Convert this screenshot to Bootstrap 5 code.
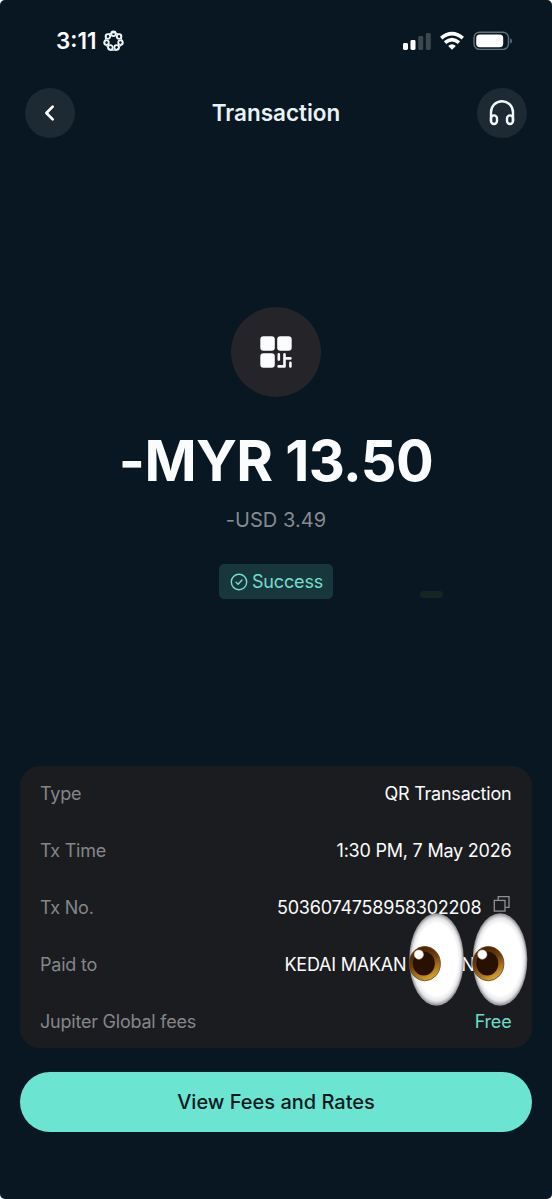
<!DOCTYPE html>
<html lang="en">
<head>
<meta charset="utf-8">
<meta name="viewport" content="width=device-width, initial-scale=1">
<title>Transaction</title>
<link href="https://cdn.jsdelivr.net/npm/bootstrap@5.3.0/dist/css/bootstrap.min.css" rel="stylesheet">
<style>
  html { background: #fff; }
  body { font-family: Inter, sans-serif; background: #fff; color: #fbfcfd; }
  .screen { width: 552px; height: 1199px; background: #081721; border-radius: 5px; overflow: hidden; }
  .status { height: 82px; padding: 0 40px 0 56px; }
  .clock { font-size: 22.5px; font-weight: 600; line-height: 1; letter-spacing: 0; }
  .top-bar { height: 62px; padding: 0 25px; }
  .round-btn { width: 50px; height: 50px; padding: 0; background: #1d2a33; color: #fff; border: 0; }
  .title { font-size: 22.5px; font-weight: 600; color: #e9f3f6; line-height: 1; }
  .hero { padding-top: 163px; height: 622px; }
  .qr { width: 90px; height: 90px; background: #252429; }
  .amount { font-size: 56px; font-weight: 700; line-height: 68px; margin-top: 30px; white-space: nowrap; letter-spacing: -.6px; }
  .amount-usd { font-size: 20px; line-height: 24px; margin-top: 13px; color: #868a92; letter-spacing: .05px; }
  .state { width: 114px; height: 35px; margin-top: 32px; padding-left: 1px; border-radius: 5px; background: #18373d; color: #75dece; font-size: 18px; gap: 4px; letter-spacing: -.15px; }
  .smudge { right: 109px; bottom: 168px; width: 23px; height: 7px; border-radius: 3px; background: #142620; filter: blur(.7px); }
  .details { height: 282px; margin: 0 20px; padding: .7px 20.6px 0 20px; border-radius: 20px; background: #1b1c1f; font-size: 18px; letter-spacing: -.22px; }
  .detail-row { height: 54px; white-space: nowrap; }
  .key { color: #85868b; }
  .free { color: #6cdccb; }
  .payee { width: 227px; }
  .payee-end { margin-left: 55px; }
  .eyes { right: -17px; top: -24px; }
  .fees-btn { height: 60px; margin: 24px 20px 0; border: 0; background: #6be5d1; color: #06191b; font-size: 20px; font-weight: 500; letter-spacing: 0; }
</style>
</head>
<body>
<main class="screen d-flex flex-column">
  <div class="status d-flex align-items-center justify-content-between">
    <div class="d-flex align-items-center">
      <span class="clock">3:11</span>
      <svg class="ms-1" width="24" height="22" viewBox="-12.5 -11 24 22" fill="none" stroke="#eef4f6" stroke-width="1.8">
        <circle cx="0" cy="-7.2" r="2.3"/><circle cx="5.63" cy="-4.49" r="2.3"/><circle cx="7.02" cy="1.6" r="2.3"/><circle cx="3.12" cy="6.49" r="2.3"/><circle cx="-3.12" cy="6.49" r="2.3"/><circle cx="-7.02" cy="1.6" r="2.3"/><circle cx="-5.63" cy="-4.49" r="2.3"/>
        <path d="M-2-8.8l5.2 1.3 3.9 1.6 1.2 4.7.6 3.9-3.4 3.8-2.7 2.6H-2.8L-5.5 6.5-8.9 2.7l.6-3.9 1.2-4.7 3.9-1.6L2-8.8" stroke-width="1.1" stroke-linejoin="round"/>
      </svg>
    </div>
    <svg width="112" height="22" viewBox="0 0 112 22">
      <g transform="translate(3 0)">
        <rect x="0" y="13" width="5" height="7" rx="1.4" fill="#fff"/>
        <rect x="7.5" y="10" width="5" height="10" rx="1.4" fill="#fff"/>
        <rect x="15.2" y="6" width="5" height="14" rx="1.4" fill="#3c474e"/>
        <rect x="22.8" y="3" width="5" height="17" rx="1.4" fill="#3c474e"/>
      </g>
      <g fill="none" stroke="#fff" stroke-width="3.6">
        <path d="M41.2 8.2Q52 -.8 62.8 8.2"/>
        <path d="M45 12.7Q52 6.6 59 12.7"/>
      </g>
      <path d="M48.2 15.9Q52 12.6 55.8 15.9L52 19.8Z" fill="#fff"/>
      <rect x="74" y="2.2" width="34.5" height="17.2" rx="5.6" fill="none" stroke="#66717a" stroke-width="1.4"/>
      <rect x="76.2" y="4.4" width="27" height="12.8" rx="3.6" fill="#fff"/>
      <path d="M110.2 8.2q1.8.7 1.8 2.7t-1.8 2.7z" fill="#66717a"/>
    </svg>
  </div>

  <header class="top-bar d-flex align-items-center justify-content-between">
    <button class="round-btn btn rounded-circle d-flex align-items-center justify-content-center" aria-label="Back">
      <svg width="20" height="20" viewBox="0 0 20 20" fill="none" stroke="#fff" stroke-width="2.7" stroke-linecap="round" stroke-linejoin="round"><path d="M12.7 3.6L6.4 10l6.3 6.4"/></svg>
    </button>
    <h1 class="title m-0">Transaction</h1>
    <button class="round-btn btn rounded-circle d-flex align-items-center justify-content-center" aria-label="Support">
      <svg width="28" height="28" viewBox="0 0 28 28" fill="none" stroke="#f2fafb" stroke-width="2.4" stroke-linecap="round" stroke-linejoin="round">
        <path d="M3 22V13.2a11 11 0 0 1 22 0V22"/>
        <rect x="3" y="16.4" width="6" height="8.6" rx="3"/>
        <rect x="19" y="16.4" width="6" height="8.6" rx="3"/>
      </svg>
    </button>
  </header>

  <section class="hero position-relative d-flex flex-column align-items-center">
    <div class="qr rounded-circle d-flex align-items-center justify-content-center flex-shrink-0">
      <svg width="32" height="32" viewBox="0 0 32 32" fill="#fbfcfd">
        <rect x=".3" y=".3" width="14.5" height="14.5" rx="3.2"/>
        <rect x="17.2" y=".3" width="14.5" height="14.5" rx="3.2"/>
        <rect x=".3" y="17.2" width="14.5" height="14.5" rx="3.2"/>
        <g fill="none" stroke="#fbfcfd" stroke-width="2.6" stroke-linecap="round" stroke-linejoin="round">
          <path d="M18.8 18.4v5.2M24.5 18.4v12H18.6M24.5 22.4h5.9M30.4 26.9v3.5"/>
        </g>
      </svg>
    </div>
    <div class="amount">-MYR 13.50</div>
    <div class="amount-usd">-USD 3.49</div>
    <div class="state d-flex align-items-center justify-content-center flex-shrink-0">
      <svg width="18" height="18" viewBox="0 0 18 18" fill="none" stroke="#75dece" stroke-width="1.4" stroke-linecap="round" stroke-linejoin="round"><circle cx="9" cy="9" r="7.7"/><path d="M6.1 9.3l2 2 3.9-4.3"/></svg>
      <span>Success</span>
    </div>
    <span class="smudge position-absolute"></span>
  </section>

  <section class="details d-flex flex-column justify-content-between flex-shrink-0">
    <div class="detail-row d-flex align-items-center justify-content-between"><span class="key">Type</span><span>QR Transaction</span></div>
    <div class="detail-row d-flex align-items-center justify-content-between"><span class="key">Tx Time</span><span>1:30 PM, 7 May 2026</span></div>
    <div class="detail-row d-flex align-items-center justify-content-between">
      <span class="key">Tx No.</span>
      <span class="d-flex align-items-center"><span>5036074758958302208</span>
        <svg class="ms-2 mb-1" width="22" height="18" viewBox="0 0 22 18" fill="none" stroke="#909195" stroke-width="1.3"><path d="M9.2 4.2V.7H20v10.7h-3.8"/><rect x="5.3" y="4.4" width="10.7" height="10.7"/></svg>
      </span>
    </div>
    <div class="detail-row position-relative d-flex align-items-center justify-content-between">
      <span class="key">Paid to</span>
      <span class="payee d-flex"><span>KEDAI MAKAN</span><span class="payee-end">N</span></span>
      <svg class="eyes position-absolute" width="120" height="94" viewBox="0 0 120 94">
        <defs>
          <radialGradient id="ball" cx=".5" cy=".5" r=".5">
            <stop offset=".78" stop-color="#fff"/><stop offset=".9" stop-color="#e6e6e8"/><stop offset="1" stop-color="#8c8c90"/>
          </radialGradient>
          <linearGradient id="iris" x1=".25" y1="0" x2=".7" y2="1">
            <stop offset="0" stop-color="#3a1c06"/><stop offset=".45" stop-color="#70400c"/><stop offset="1" stop-color="#e0ae32"/>
          </linearGradient>
          <g id="eye">
            <ellipse cx="27.5" cy="46.5" rx="27.3" ry="46.2" fill="url(#ball)"/>
            <ellipse cx="15.8" cy="50.6" rx="15.6" ry="17.2" fill="url(#iris)" stroke="#64400f" stroke-width=".8"/>
            <ellipse cx="14.8" cy="50.4" rx="11" ry="12" fill="#281003"/>
            <circle cx="9.8" cy="41.6" r="4.6" fill="#fff" stroke="#e2cfbd" stroke-width=".6"/>
          </g>
        </defs>
        <use href="#eye" x="1" y="0"/>
        <use href="#eye" x="64.5" y="0"/>
      </svg>
    </div>
    <div class="detail-row d-flex align-items-center justify-content-between"><span class="key">Jupiter Global fees</span><span class="free">Free</span></div>
  </section>

  <button class="fees-btn btn rounded-pill flex-shrink-0">View Fees and Rates</button>
</main>
<script src="https://cdn.jsdelivr.net/npm/bootstrap@5.3.0/dist/js/bootstrap.bundle.min.js"></script>
</body>
</html>
